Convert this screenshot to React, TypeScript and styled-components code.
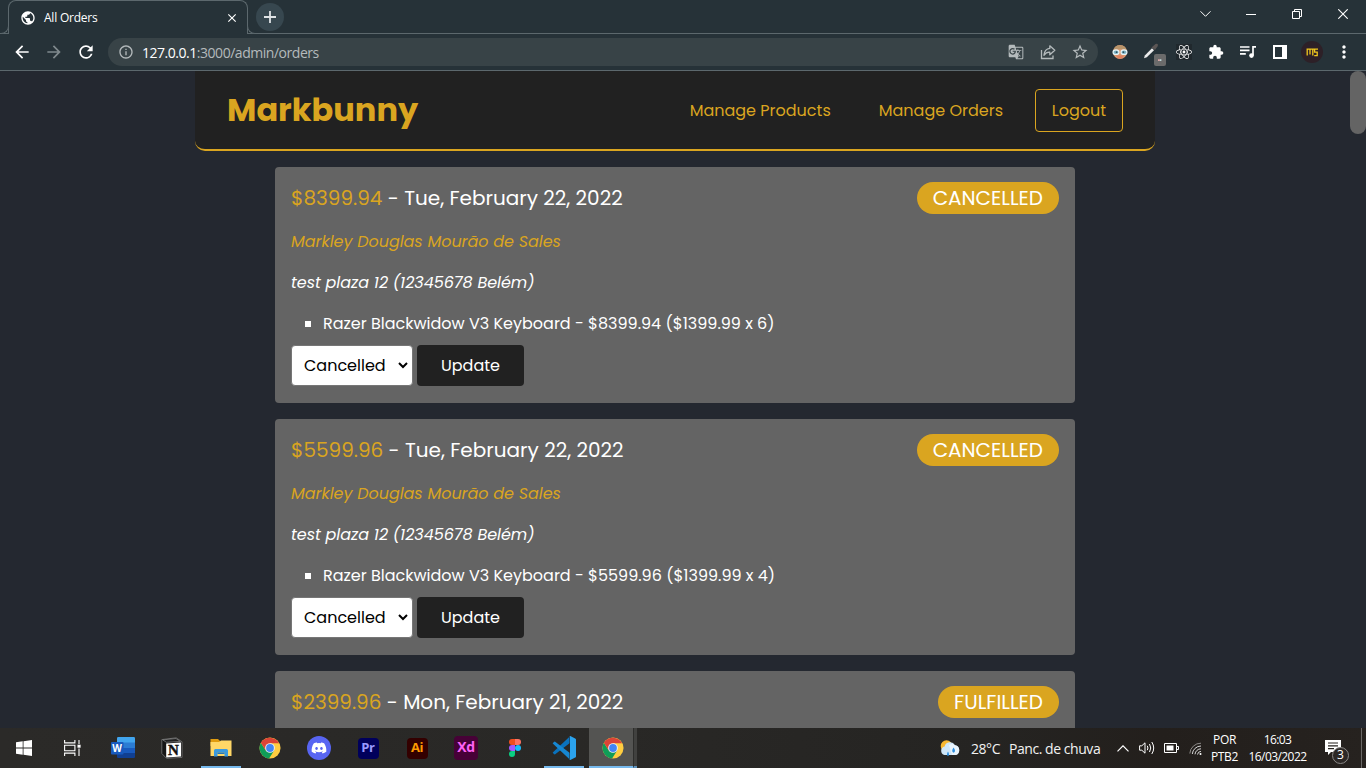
import React from "react";
import styled, { createGlobalStyle, css } from "styled-components";
import {
  MdArrowBack,
  MdArrowForward,
  MdClose,
  MdExtension,
  MdGTranslate,
  MdInfoOutline,
  MdMoreVert,
  MdPublic,
  MdRefresh,
  MdStarBorder,
} from "react-icons/md";
import { FaDiscord, FaReact } from "react-icons/fa";

const gold = "#daa520";
const dark = "#212121";
const frame = "#263238";
const frameLine = "#5c686d";

const GlobalStyle = createGlobalStyle`
  *, *::before, *::after { box-sizing: border-box; }
  body { margin: 0; background: #242830; }
  p, h1, ul { margin: 0; padding: 0; font-weight: inherit; }
  svg { display: block; flex: none; }
`;

const systemFont = css`
  font-family: "Open Sans", "Noto Sans", sans-serif;
`;

const webFont = css`
  font-family: Poppins, Inter, "Open Sans", sans-serif;
`;

const Screen = styled.div`
  width: 1366px;
  height: 768px;
  overflow: hidden;
  display: flex;
  flex-direction: column;
`;

/* ---------- Browser frame ---------- */

const TabStrip = styled.div`
  flex: none;
  height: 34px;
  display: flex;
  background: ${frame};
  border-bottom: 1px solid ${frameLine};
  color: #fff;
  ${systemFont}
`;

const Tab = styled.div`
  position: relative;
  width: 240px;
  height: 34px;
  margin-left: 8px;
  padding: 0 8px 0 11px;
  display: flex;
  align-items: center;
  background: ${frame};
  border: 1px solid ${frameLine};
  border-bottom: 0;
  border-radius: 8px 8px 0 0;
  font-size: 12px;
  letter-spacing: -0.22px;

  &::before,
  &::after {
    content: "";
    position: absolute;
    bottom: 0;
    width: 8px;
    height: 8px;
    background: ${frame};
    border-bottom: 1px solid ${frameLine};
  }
  &::before {
    left: -8px;
    border-right: 1px solid ${frameLine};
    border-bottom-right-radius: 8px;
  }
  &::after {
    right: -8px;
    border-left: 1px solid ${frameLine};
    border-bottom-left-radius: 8px;
  }
`;

const TabTitle = styled.span`
  flex: 1;
  margin-left: 8px;
`;

const NewTab = styled.div`
  width: 28px;
  height: 28px;
  margin: 3px 0 0 8px;
  border-radius: 50%;
  display: grid;
  place-items: center;
  background: #37474f;
`;

const WindowControls = styled.div`
  margin-left: auto;
  height: 28px;
  display: flex;
`;

const WindowControl = styled.div`
  width: 46px;
  display: grid;
  place-items: center;
`;

const Toolbar = styled.div`
  flex: none;
  height: 37px;
  padding: 0 6px;
  display: flex;
  align-items: center;
  background: ${frame};
  border-bottom: 1px solid ${frameLine};
  color: #fff;
  ${systemFont}
`;

const ToolSlot = styled.div<{ $dim?: boolean }>`
  width: 32px;
  height: 32px;
  display: grid;
  place-items: center;
  color: ${(p) => (p.$dim ? "#7f898d" : "#fff")};
`;

const Omnibox = styled.div`
  width: 990px;
  height: 28px;
  margin: 0 6px;
  padding: 0 2px 0 10px;
  display: flex;
  align-items: center;
  border-radius: 14px;
  background: #384347;
  color: #b4babc;
`;

const PageAction = styled(ToolSlot)`
  color: #b4babc;
`;

const Address = styled.span`
  flex: 1;
  margin-left: 8px;
  font-size: 14px;
  letter-spacing: -0.47px;

  b {
    font-weight: 400;
    color: #fff;
  }
`;

const ReactTile = styled.div`
  width: 16px;
  height: 16px;
  background: #20282d;
`;

const Avatar = styled.div`
  width: 22px;
  height: 22px;
  border-radius: 50%;
  display: grid;
  place-items: center;
  background: #2d2027;
`;

/* ---------- Page ---------- */

const Viewport = styled.div`
  height: 657px;
  display: flex;
  overflow: hidden;
  background: #242830;
  ${webFont}
  font-size: 16px;
`;

const Page = styled.div`
  flex: 1;
  display: flex;
  flex-direction: column;
  align-items: center;
`;

const ScrollTrack = styled.div`
  width: 16px;
`;

const ScrollThumb = styled.div`
  height: 63px;
  border-radius: 8px;
  background: #646464;
`;

const SiteHeader = styled.header`
  flex: none;
  width: 960px;
  height: 80px;
  padding: 0 32px;
  display: flex;
  align-items: center;
  background: ${dark};
  border-bottom: 2px solid ${gold};
  border-radius: 0 0 10px 10px;
  color: ${gold};
`;

const Brand = styled.h1`
  flex: 1;
  font-size: 32px;
  font-weight: 700;
  line-height: 40px;
`;

const NavLink = styled.a`
  margin-right: 48px;

  &:last-of-type {
    margin-right: 32px;
  }
`;

const LogoutButton = styled.button`
  width: 88px;
  height: 43px;
  padding: 0;
  background: none;
  border: 1px solid ${gold};
  border-radius: 4px;
  color: ${gold};
  font: inherit;
`;

const OrderList = styled.main`
  width: 800px;
  padding-top: 16px;
  display: flex;
  flex-direction: column;
  gap: 16px;
`;

const Card = styled.article`
  flex: none;
  height: 236px;
  padding: 15px 16px 17px;
  border-radius: 4px;
  background: #646464;
  color: #fff;
  line-height: 25px;
`;

const CardTop = styled.div`
  height: 32px;
  margin-bottom: 15px;
  display: flex;
  align-items: center;
  justify-content: space-between;
  font-size: 20px;
`;

const OrderTitle = styled.p`
  white-space: pre;
`;

const Amount = styled.span`
  color: ${gold};
`;

const Badge = styled.span`
  height: 32px;
  padding: 0 16px;
  border-radius: 16px;
  background: ${gold};
  line-height: 32px;
`;

const Customer = styled.p`
  margin-bottom: 16px;
  font-style: italic;
  letter-spacing: -0.03px;
  color: ${gold};
`;

const Street = styled.p`
  margin-bottom: 16px;
  font-style: italic;
  letter-spacing: -0.03px;
`;

const Items = styled.ul`
  margin-bottom: 9px;
  list-style: none;
`;

const Item = styled.li`
  padding-left: 14px;
  display: flex;
  align-items: center;

  &::before {
    content: "";
    width: 6px;
    height: 6px;
    margin: 1px 12px 0 0;
    background: #fff;
  }
`;

const Controls = styled.div`
  display: flex;
  gap: 4px;
`;

const StatusSelect = styled.div`
  width: 122px;
  height: 41px;
  padding: 0 4px 0 12px;
  display: flex;
  align-items: center;
  justify-content: space-between;
  background: #fff;
  border: 1px solid #767676;
  border-radius: 4px;
  color: #000;
`;

const UpdateButton = styled.button`
  width: 107px;
  height: 41px;
  padding: 0;
  border: 0;
  border-radius: 4px;
  background: ${dark};
  color: #fff;
  font: inherit;
`;

/* ---------- Taskbar ---------- */

const Taskbar = styled.div`
  flex: none;
  height: 40px;
  display: flex;
  background: linear-gradient(90deg, #2b2a28, #292826 45%, #252422 72%, #231f1c 85%, #26221f);
  color: #fff;
  ${systemFont}
`;

const SystemButton = styled.div`
  width: 48px;
  display: grid;
  place-items: center;
`;

const Apps = styled.div`
  flex: 1;
  margin-left: 3px;
  display: flex;
  gap: 1px;
`;

const AppButton = styled.div<{ $open?: boolean; $active?: boolean }>`
  width: 48px;
  padding: 0 4px;
  position: relative;
  display: grid;
  place-items: center;
  background: ${(p) => (p.$active ? "#545452" : "transparent")};

  &::after {
    content: "";
    display: ${(p) => (p.$open || p.$active ? "block" : "none")};
    position: absolute;
    bottom: 0;
    left: ${(p) => (p.$active ? 0 : 4)}px;
    right: ${(p) => (p.$active ? 0 : 4)}px;
    height: 2px;
    background: #76b9ed;
  }
`;

const WindowStack = styled.div`
  width: 4px;
  margin-left: -5px;
  position: relative;
  background: #41413f;
  border-left: 1px solid #2e2e2c;
  border-bottom: 2px solid #5f93bd;
`;

const AdobeTile = styled.div<{ $bg: string; $fg: string; $size: number }>`
  width: ${(p) => p.$size}px;
  height: ${(p) => p.$size}px;
  border-radius: 4px;
  background: ${(p) => p.$bg};
  color: ${(p) => p.$fg};
  font-size: ${(p) => (p.$size > 22 ? 14 : 13)}px;
  font-weight: 700;
  letter-spacing: -0.4px;
  line-height: ${(p) => p.$size - 2}px;
  text-align: center;
`;

const Weather = styled.div`
  display: flex;
  align-items: center;
  font-size: 14px;
  letter-spacing: -0.45px;
  color: #f2f2f2;
  white-space: nowrap;
`;

const Temperature = styled.span`
  width: 38px;
  margin-left: 11px;
`;

const Forecast = styled.span`
  width: 102px;
`;

const Tray = styled.div`
  display: flex;
  align-items: center;
`;

const TraySlot = styled.div`
  width: 24px;
  display: grid;
  place-items: center;
`;

const TrayText = styled.div<{ $width: number; $tracking: number }>`
  width: ${(p) => p.$width}px;
  margin-top: -1px;
  font-size: 12px;
  line-height: 17px;
  text-align: center;
  letter-spacing: ${(p) => p.$tracking}px;
  white-space: nowrap;
`;

const Notifications = styled.div`
  width: 48px;
  height: 40px;
  padding: 12px 0 0 12px;
  position: relative;
`;

const Count = styled.span`
  position: absolute;
  left: 19px;
  top: 19px;
  width: 17px;
  height: 17px;
  border: 1px solid #8b8987;
  border-radius: 50%;
  background: #2c2826;
  font-size: 12px;
  line-height: 14px;
  text-align: center;
`;

const ShowDesktop = styled.div`
  width: 5px;
  height: 40px;
  border-left: 1px solid #6a6866;
`;

/* ---------- Drawings ---------- */

const ChromeLogo = () => (
  <svg width="22" height="22" viewBox="0 0 48 48">
    <circle cx="24" cy="24" r="23" fill="#ffcd40" />
    <path d="M4.1 12.5A23 23 0 0 0 22 46.9L33.1 29.2 24 24 14.9 29.2z" fill="#0f9d58" />
    <path d="M4.1 12.5A23 23 0 0 1 43.9 13.5H24L14.9 29.2z" fill="#db4437" />
    <circle cx="24" cy="24" r="10.6" fill="#f1f1f1" />
    <circle cx="24" cy="24" r="8.5" fill="#4285f4" />
  </svg>
);

const WindowsLogo = () => (
  <svg width="16" height="16" viewBox="0 0 16 16" fill="#fff">
    <path d="M0 2.2 6.7 1.3V7.6H0zM7.5 1.2 16 0V7.6H7.5zM0 8.4H6.7V14.7L0 13.8zM7.5 8.4H16V16L7.5 14.8z" />
  </svg>
);

const TaskViewIcon = () => (
  <svg width="17" height="16" viewBox="0 0 17 16" fill="none" stroke="#fff" strokeWidth="1.1">
    <path d="M.6 0V2.9H10.9V0M.6 16V13.1H10.9V16M.6 5.2H10.9V10.8H.6zM15 0V4M15 8.5V16" />
    <path d="M13.5 4.7H16.6V7.7H13.5z" fill="#fff" stroke="none" />
  </svg>
);

const WordLogo = () => (
  <svg width="24" height="22" viewBox="0 0 24 22">
    <path d="M6 1.2Q6 0 7.2 0H22.8Q24 0 24 1.2V6H6z" fill="#41a5ee" />
    <path d="M6 5.5H24V11H6z" fill="#2b7cd3" />
    <path d="M6 11H24V16H6z" fill="#185abd" />
    <path d="M6 16H24V20Q24 21 22.8 21H7.2Q6 21 6 20z" fill="#103f91" />
    <rect x="0" y="5" width="12.5" height="12.5" rx="1" fill="#185abd" />
    <text x="6.2" y="14.8" fontSize="10" fontWeight="700" textAnchor="middle" fill="#fff">W</text>
  </svg>
);

const NotionLogo = () => (
  <svg width="22" height="22" viewBox="0 0 22 22">
    <path d="M.8 2.6 15.2.8 21 4.8V20.4L5.6 21.4.8 16.5z" fill="#161616" stroke="#787878" strokeWidth=".8" />
    <path d="M1.8 2.9 15 1.5 19.3 4.4 5.4 5.3z" fill="#202020" stroke="#9a9a9a" strokeWidth=".6" />
    <path d="M5.2 6.4 20 5.5V19.6L5.2 20.6z" fill="#fff" />
    <text x="12.4" y="18" fontSize="15" fontWeight="700" fontFamily="Liberation Serif, serif" textAnchor="middle" fill="#111" stroke="#111" strokeWidth=".4">N</text>
  </svg>
);

const FolderLogo = () => (
  <svg width="22" height="20" viewBox="0 0 22 20">
    <path d="M.5 1H8L10 3V8H.5z" fill="#e09c10" />
    <path d="M.5 4H9L11 2.5H21.5V18H.5z" fill="#ffd767" />
    <path d="M4 18.5V12.5Q4 11 5.5 11H16.5Q18 11 18 12.5V18.5H14.5V14.5H7.5V18.5z" fill="#3b9ade" />
    <path d="M7.5 14.5H14.5V16H7.5z" fill="#2377b8" />
  </svg>
);

const DiscordLogo = () => (
  <svg width="24" height="24" viewBox="0 0 24 24">
    <circle cx="12" cy="12" r="12" fill="#5865f2" />
    <FaDiscord x="4" y="4" width="16" height="16" color="#fff" />
  </svg>
);

const FigmaLogo = () => (
  <svg width="12" height="18" viewBox="0 0 12 18">
    <path d="M3 0H6V6H3A3 3 0 0 1 3 0z" fill="#f24e1e" />
    <path d="M6 0H9A3 3 0 0 1 9 6H6z" fill="#ff7262" />
    <path d="M3 6H6V12H3A3 3 0 0 1 3 6z" fill="#a259ff" />
    <circle cx="9" cy="9" r="3" fill="#1abcfe" />
    <path d="M3 12H6V15A3 3 0 1 1 3 12z" fill="#0acf83" />
  </svg>
);

const CodeLogo = () => (
  <svg width="24" height="24" viewBox="0 0 24 24">
    <path d="M1 16.2 17.5.8V7.2L3.2 18.2Q2.6 18.6 2 18.1L.9 17.1Q.5 16.6 1 16.2z" fill="#0a72bd" />
    <path d="M1 7.8 17.5 23.2V16.8L3.2 5.8Q2.6 5.4 2 5.9L.9 6.9Q.5 7.4 1 7.8z" fill="#1687d2" />
    <path d="M17.3.2Q17.8-.1 18.3.1L23.2 2.4Q24 2.8 24 3.6V20.4Q24 21.2 23.2 21.6L18.3 23.9Q17.3 24.2 16.6 23.5 18 24.2 18 22.7V1.3Q18-.1 16.6.5z" fill="#2ba3ee" />
  </svg>
);

const WeatherIcon = () => (
  <svg width="20" height="17" viewBox="0 0 20 17">
    <circle cx="6.5" cy="6" r="5.8" fill="#f7b731" />
    <path d="M4.5 15A4.3 4.3 0 0 1 4.6 6.6 5.6 5.6 0 0 1 15 5.2 5 5 0 0 1 15.4 15z" fill="#cfe6f8" />
    <path d="M9 5.2A5 5 0 0 1 15 5.2 5 5 0 0 1 15.4 15H12z" fill="#eaf5fd" />
    <path d="M13.6 7.5Q16.4 11.3 13.6 12.8 10.8 11.3 13.6 7.5zM8 11.5Q10 15 8 16.2 6 15 8 11.5z" fill="#2c8fe0" />
  </svg>
);

const GlassesFace = () => (
  <svg width="16" height="16" viewBox="0 0 16 16">
    <circle cx="8" cy="8" r="7" fill="#d99a73" />
    <path d="M1.2 6.5A7 7 0 0 1 14.8 6.5Q8 3.5 1.2 6.5z" fill="#b8946a" />
    <path d="M4 11.5H12L10 14.5H6z" fill="#e0805f" />
    <ellipse cx="4" cy="8.2" rx="3" ry="2.3" fill="#7fb5c6" stroke="#e8f4f6" strokeWidth="1.1" />
    <ellipse cx="12" cy="8.2" rx="3" ry="2.3" fill="#7fb5c6" stroke="#e8f4f6" strokeWidth="1.1" />
    <circle cx="4.6" cy="8.2" r=".9" fill="#2d5261" />
    <circle cx="11.4" cy="8.2" r=".9" fill="#2d5261" />
  </svg>
);

const EyeDropper = () => (
  <svg width="30" height="30" viewBox="0 0 30 30">
    <path d="M7.8 18.5 15 11.3 17 13.3 9.8 20.3 7 21.3z" fill="#ececec" />
    <path d="M14.5 10.5 18.5 7Q21.5 6 20.8 9L18 12.9z" fill="#5b5655" />
    <rect x="17" y="17" width="12" height="12" rx="2" fill="#6b6b6b" />
    <rect x="21" y="22.4" width="1.8" height="1.4" fill="#f3b1b1" />
    <rect x="22.8" y="22.4" width="1.6" height="1.4" fill="#d4f3f6" />
  </svg>
);

const ShareIcon = () => (
  <svg width="16" height="16" viewBox="0 0 16 16" fill="none" stroke="currentColor" strokeWidth="1.3">
    <path d="M1.5 6V14.5H13V11.5" />
    <path d="M9.8 1.8 14.8 6.3 9.8 10.8V8.2Q6.2 8 3.9 11.3 4.6 5 9.8 4.4z" strokeLinejoin="round" />
  </svg>
);

const MediaIcon = () => (
  <svg width="16" height="14" viewBox="0 0 16 14" fill="none" stroke="#fff" strokeWidth="1.7">
    <path d="M0 2H9.5M0 5.4H9.5M0 8.8H5.8M13 10.5V1.8H16" />
    <circle cx="11.5" cy="10.6" r="2.3" fill="#fff" stroke="none" />
  </svg>
);

const PanelIcon = () => (
  <svg width="14" height="14" viewBox="0 0 14 14" fill="#fff" fillRule="evenodd">
    <path d="M0 0H14V14H0zM2 2V12H9V2z" />
  </svg>
);

const AvatarMark = () => (
  <svg width="12" height="9" viewBox="0 0 12 9" fill="none" stroke="#f2c81e" strokeWidth="1.3">
    <path d="M1.2 7.5V1.2H12M4 1.2V6.5M6.8 1.2V7.5M8.6 1.2V4.2H11.2V7.6H8.2" />
  </svg>
);

/* ---------- Data ---------- */

interface Order {
  amount: string;
  date: string;
  status: string;
  unit?: string;
}

const orders: Order[] = [
  { amount: "$8399.94", date: "Tue, February 22, 2022", status: "CANCELLED", unit: "($1399.99 x 6)" },
  { amount: "$5599.96", date: "Tue, February 22, 2022", status: "CANCELLED", unit: "($1399.99 x 4)" },
  { amount: "$2399.96", date: "Mon, February 21, 2022", status: "FULFILLED" },
];

const OrderCard = ({ order }: { order: Order }) => (
  <Card>
    <CardTop>
      <OrderTitle>
        <Amount>{order.amount}</Amount> - {order.date}
      </OrderTitle>
      <Badge>{order.status}</Badge>
    </CardTop>
    {order.unit && (
      <>
        <Customer>Markley Douglas Mourão de Sales</Customer>
        <Street>test plaza 12 (12345678 Belém)</Street>
        <Items>
          <Item>
            Razer Blackwidow V3 Keyboard - {order.amount} {order.unit}
          </Item>
        </Items>
        <Controls>
          <StatusSelect>
            Cancelled
            <svg width="10" height="7" viewBox="0 0 10 7" fill="none" stroke="#000" strokeWidth="2">
              <path d="M1 1 5 5 9 1" />
            </svg>
          </StatusSelect>
          <UpdateButton>Update</UpdateButton>
        </Controls>
      </>
    )}
  </Card>
);

export default function App() {
  return (
    <Screen>
      <GlobalStyle />

      <TabStrip>
        <Tab>
          <MdPublic size={16} />
          <TabTitle>All Orders</TabTitle>
          <MdClose size={14} />
        </Tab>
        <NewTab>
          <svg width="12" height="12" viewBox="0 0 12 12" stroke="#dfe3e5" strokeWidth="1.8">
            <path d="M6 0V12M0 6H12" />
          </svg>
        </NewTab>
        <WindowControls>
          <WindowControl>
            <svg width="11" height="6" viewBox="0 0 11 6" fill="none" stroke="#fff">
              <path d="M.5.3 5.5 5.3 10.5.3" />
            </svg>
          </WindowControl>
          <WindowControl>
            <svg width="10" height="1" viewBox="0 0 10 1" fill="#fff">
              <path d="M0 0H10V1H0z" />
            </svg>
          </WindowControl>
          <WindowControl>
            <svg width="10" height="10" viewBox="0 0 10 10" fill="none" stroke="#fff">
              <path d="M.5 2.5H7.5V9.5H.5zM2.5 2.5V.5H9.5V7.5H7.5" />
            </svg>
          </WindowControl>
          <WindowControl>
            <svg width="10" height="10" viewBox="0 0 10 10" stroke="#fff" strokeWidth="1.1">
              <path d="M.3.3 9.7 9.7M9.7.3.3 9.7" />
            </svg>
          </WindowControl>
        </WindowControls>
      </TabStrip>

      <Toolbar>
        <ToolSlot><MdArrowBack size={20} /></ToolSlot>
        <ToolSlot $dim><MdArrowForward size={20} /></ToolSlot>
        <ToolSlot><MdRefresh size={20} /></ToolSlot>
        <Omnibox>
          <MdInfoOutline size={16} />
          <Address><b>127.0.0.1</b>:3000/admin/orders</Address>
          <PageAction><MdGTranslate size={16} /></PageAction>
          <PageAction><ShareIcon /></PageAction>
          <PageAction><MdStarBorder size={18} /></PageAction>
        </Omnibox>
        <ToolSlot><GlassesFace /></ToolSlot>
        <ToolSlot><EyeDropper /></ToolSlot>
        <ToolSlot><ReactTile><FaReact size={16} /></ReactTile></ToolSlot>
        <ToolSlot><MdExtension size={16} /></ToolSlot>
        <ToolSlot><MediaIcon /></ToolSlot>
        <ToolSlot><PanelIcon /></ToolSlot>
        <ToolSlot><Avatar><AvatarMark /></Avatar></ToolSlot>
        <ToolSlot><MdMoreVert size={20} /></ToolSlot>
      </Toolbar>

      <Viewport>
        <Page>
          <SiteHeader>
            <Brand>Markbunny</Brand>
            <NavLink>Manage Products</NavLink>
            <NavLink>Manage Orders</NavLink>
            <LogoutButton>Logout</LogoutButton>
          </SiteHeader>
          <OrderList>
            {orders.map((order) => (
              <OrderCard key={order.amount} order={order} />
            ))}
          </OrderList>
        </Page>
        <ScrollTrack>
          <ScrollThumb />
        </ScrollTrack>
      </Viewport>

      <Taskbar>
        <SystemButton><WindowsLogo /></SystemButton>
        <SystemButton><TaskViewIcon /></SystemButton>
        <Apps>
          <AppButton><WordLogo /></AppButton>
          <AppButton><NotionLogo /></AppButton>
          <AppButton $open><FolderLogo /></AppButton>
          <AppButton><ChromeLogo /></AppButton>
          <AppButton><DiscordLogo /></AppButton>
          <AppButton><AdobeTile $bg="#00005b" $fg="#9999ff" $size={21}>Pr</AdobeTile></AppButton>
          <AppButton><AdobeTile $bg="#330000" $fg="#ff9a00" $size={21}>Ai</AdobeTile></AppButton>
          <AppButton><AdobeTile $bg="#470137" $fg="#ff61f6" $size={24}>Xd</AdobeTile></AppButton>
          <AppButton><FigmaLogo /></AppButton>
          <AppButton $open><CodeLogo /></AppButton>
          <AppButton $active><ChromeLogo /></AppButton>
          <WindowStack />
        </Apps>
        <Weather>
          <WeatherIcon />
          <Temperature>28°C</Temperature>
          <Forecast>Panc. de chuva</Forecast>
        </Weather>
        <Tray>
          <TraySlot>
            <svg width="12" height="7" viewBox="0 0 12 7" fill="none" stroke="#fff" strokeWidth="1.2">
              <path d="M.5 6.3 6 .8 11.5 6.3" />
            </svg>
          </TraySlot>
          <TraySlot>
            <svg width="16" height="14" viewBox="0 0 16 14" fill="none" stroke="#fff">
              <path d="M.6 4.8H2.8L6 1.8V12.2L2.8 9.2H.6z" />
              <path d="M8.3 4.8Q9.6 7 8.3 9.2M10.5 3Q13 7 10.5 11M12.8 1Q16.6 7 12.8 13" />
            </svg>
          </TraySlot>
          <TraySlot>
            <svg width="15" height="10" viewBox="0 0 15 10" fill="none" stroke="#fff">
              <path d="M.5.5H12.5V9.5H.5zM13 3.5H14.5V6.5H13" />
              <path d="M2.5 2.5H9.5V7.5H2.5z" fill="#fff" stroke="none" />
            </svg>
          </TraySlot>
          <TraySlot>
            <svg width="13" height="13" viewBox="0 0 13 13" fill="none" stroke="#d6d6d6">
              <path d="M.8 11.5A11 11 0 0 1 12 1.2" stroke="#8d8b89" />
              <path d="M3.3 12A8.8 8.8 0 0 1 12 4M6 12.3A6 6 0 0 1 12 6.8M8.5 12.5A3.6 3.6 0 0 1 12 9.4" />
              <circle cx="11.5" cy="12" r="1" fill="#fff" stroke="none" />
            </svg>
          </TraySlot>
          <TrayText $width={35} $tracking={-0.3}>POR<br />PTB2</TrayText>
          <TrayText $width={71} $tracking={-0.57}>16:03<br />16/03/2022</TrayText>
        </Tray>
        <Notifications>
          <svg width="16" height="16" viewBox="0 0 16 16" fill="#fff" fillRule="evenodd">
            <path d="M0 0H16V12H6L3 15V12H0zM3 2.5V3.6H13V2.5zM3 5.3V6.4H13V5.3zM3 8.1V9.2H9V8.1z" />
          </svg>
          <Count>3</Count>
        </Notifications>
        <ShowDesktop />
      </Taskbar>
    </Screen>
  );
}
